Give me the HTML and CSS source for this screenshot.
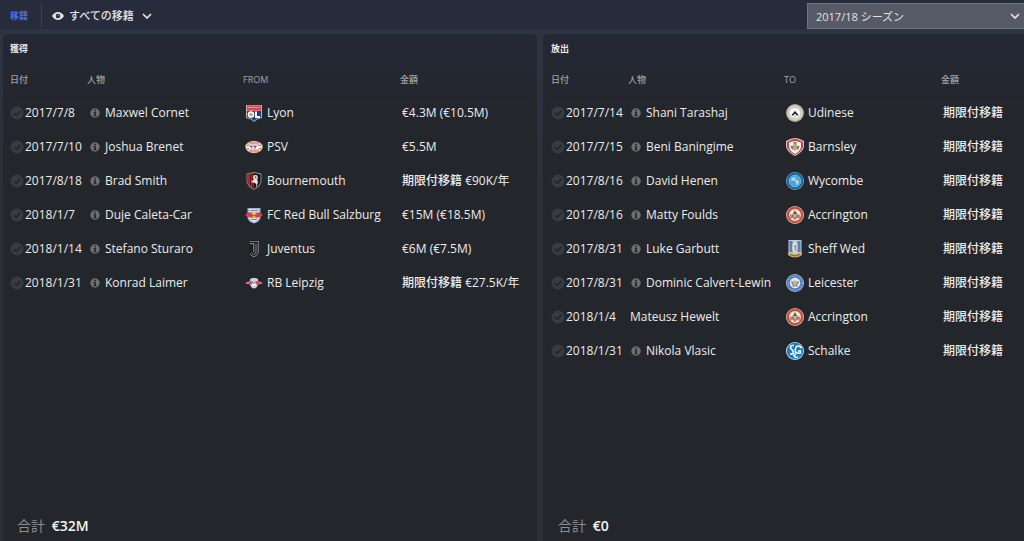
FILE: index.html
```html
<!DOCTYPE html>
<html lang="ja">
<head>
    <meta charset="UTF-8">
    <meta name="viewport" content="width=device-width, initial-scale=1.0">
    <title>移籍</title>
    <link rel="stylesheet" href="styles.css">
</head>
<body>
    <svg class="sprite" aria-hidden="true">
        <symbol id="check" viewBox="0 0 14 14">
            <circle cx="7" cy="7" r="6.5" fill="#383b3f"/>
            <path d="M4 7.2l2.2 2.1L10.300 5" fill="none" stroke="#202327" stroke-width="1.5"/>
        </symbol>
        <symbol id="info" viewBox="0 0 10 10">
            <circle cx="5" cy="5" r="4.700" fill="#6d6f71"/>
            <path d="M4.200 1.800h1.700v1.400H4.200zM3.600 4.100h2.300v3.200h.7v.9H3.500v-.9h.7V5h-.6z" fill="#24272b"/>
        </symbol>
        <symbol id="chevron" viewBox="0 0 10 6">
            <path d="M1 1l4 4 4-4" fill="none" stroke="#e2e3e5" stroke-width="1.700"/>
        </symbol>
        <symbol id="lyon" viewBox="0 0 18 18">
            <path d="M1 1h16v13l-5 1.500L9 18l-3-2.500L1 14z" fill="#b9b3ae"/>
            <path d="M2 1.500h14v5H2z" fill="#d84652"/>
            <path d="M3 3.500h12" stroke="#eda0a2" stroke-width="1"/>
            <path d="M2 7h14v6.500l-4.500 1.300L9 17l-2.500-2.200L2 13.500z" fill="#1b3f83"/>
            <circle cx="6" cy="10.500" r="2.600" fill="#d9a54b" stroke="#fff" stroke-width="1.500"/>
            <path d="M11 7.500V13h4" fill="none" stroke="#fff" stroke-width="2"/>
        </symbol>
        <symbol id="psv" viewBox="0 0 18 18">
            <ellipse cx="9" cy="9" rx="8.800" ry="6.200" fill="#c9a173"/>
            <ellipse cx="9" cy="9" rx="8" ry="5.500" fill="#f4e9e6"/>
            <path d="M4 5h10M2 7.200h14M2 10.800h14M4 13h10" stroke="#d84a50" stroke-width="1.100"/>
            <path d="M4 7.500h9.500V11H4z" fill="#fff"/>
            <path d="M5 8.500h2.500M8.500 8.500h3M6 10h1.500M9 10h2" stroke="#4d4a7c" stroke-width="1.200"/>
        </symbol>
        <symbol id="bournemouth" viewBox="0 0 18 18">
            <path d="M1.500 1.500L9 0l7.500 1.500V9q0 5-7.500 9-7.500-4-7.500-9z" fill="#8d8c88"/>
            <path d="M2.500 2.500L9 1l6.500 1.500V9q0 4-6.500 8-6.500-4-6.500-8z" fill="#171718"/>
            <path d="M2.500 2.500L9 1v16Q2.500 13 2.500 9z" fill="#ba202a"/>
            <path d="M5.500 2v11.500M7.700 2v13" stroke="#4d1015" stroke-width=".8"/>
            <path d="M10.500 15.500q2-3-.5-4.500L6 10q2-3 6-3l1 3-1.500 5z" fill="#e2dfdc"/>
            <circle cx="10.500" cy="5.500" r="2.400" fill="#efeeec"/>
            <path d="M9.500 5l1.500-.7.7 1.500-1 .8z" fill="#333"/>
        </symbol>
        <symbol id="salzburg" viewBox="0 0 18 18">
            <path d="M2.500 2h13v10q-1 4-6.500 5.500Q3.500 16 2.500 12z" fill="#a4adc8"/>
            <path d="M4 3h10v3H4z" fill="#d5daea"/>
            <path d="M5 4.500h8" stroke="#7e89b3" stroke-width="1"/>
            <circle cx="9" cy="8.500" r="2.600" fill="#f3c441"/>
            <path d="M0 9l3-2.500 3 .5 3 2.500L12 7l3-.5L18 9l-2 1.500-3 .5-2 .5-1-1.500H8l-1 1.500-2-.5-3-.5z" fill="#d93c4a"/>
            <path d="M4 12h10l-2 3-3 1.500L6 15z" fill="#dbe0ee"/>
            <path d="M6 13.500h6" stroke="#7781af" stroke-width="1"/>
        </symbol>
        <symbol id="juventus" viewBox="0 0 18 18">
            <path d="M4 0h10v12q0 4-5 5.500-2.500-.5-4-2.500" fill="#1b1d20"/>
            <path d="M4.500 1.500h9M4.500 3.700h5" stroke="#77797b" stroke-width="1.200"/>
            <path d="M13.300 1v11q0 3-4.300 4.800-2.500-.8-4-2.800M11 4v8q0 1.500-2.500 2.500-1.500-.5-2-2M8.700 4v8" fill="none" stroke="#8b8d8f" stroke-width="1"/>
        </symbol>
        <symbol id="leipzig" viewBox="0 0 18 18">
            <path d="M5 5l2.500-1h3L13 5v6l-2 3-2 .5L7 14l-2-3z" fill="#cbd0dd"/>
            <path d="M0 9l4-2 3 .3L9 9l2-1.700 3-.3 4 2-4 1.300-3 .2-2-1-2 1-3-.2z" fill="#db4a60"/>
            <path d="M7 8.500l2 1.500 2-1.500-.5 3.500h-3z" fill="#f4f5f8"/>
            <path d="M1 9.200h3M14 9.200h3" stroke="#e5c3cb" stroke-width=".7"/>
        </symbol>
        <symbol id="udinese" viewBox="0 0 18 18">
            <circle cx="9" cy="9" r="9" fill="#b5a68c"/>
            <circle cx="9" cy="9" r="7.800" fill="#d6d0c4"/>
            <circle cx="9" cy="9" r="5.600" fill="#fafafa" stroke="#c4c4c4" stroke-width=".7"/>
            <path d="M9 7l3.500 4-1.300.7L9 9.500l-2.200 2.200-1.300-.7z" fill="#17191c"/>
            <path d="M7.500 12.500L9 11l1.500 1.500L9 14z" fill="#c6c6c6"/>
        </symbol>
        <symbol id="barnsley" viewBox="0 0 18 18">
            <path d="M0 3q5-3 9-3t9 3v6q-2 6-9 9-7-3-9-9z" fill="#d9c5c4"/>
            <path d="M1 4q5-3 8-3t8 3v5q-2 5-8 8-6-3-8-8z" fill="#d33d4b"/>
            <path d="M3 4.500q6-3 12 0v5q-1.500 4-6 6.500-4.500-2.500-6-6.500z" fill="#f1efed"/>
            <path d="M7 6.500h4V11l-2 2-2-2z" fill="#cda544"/>
            <path d="M4.500 8H7v4l-2-2M11 8h2.500l-1 3-1.500 1z" fill="#567fa5"/>
            <path d="M7.500 4h3v2.500h-3z" fill="#7e9174"/>
        </symbol>
        <symbol id="wycombe" viewBox="0 0 18 18">
            <circle cx="9" cy="9" r="9" fill="#6ba2c4"/>
            <circle cx="9" cy="9" r="8.200" fill="#155d94"/>
            <circle cx="9" cy="9" r="6" fill="#45a8dc" stroke="#9ac8df" stroke-width=".7"/>
            <path d="M5 8q1-3 4-3l1 1.500 2 2 1 2-2 3-1-3-2-1z" fill="#b9d9e7"/>
            <path d="M7 9l2 1M9 7l2 1.500" stroke="#286a9e" stroke-width=".8"/>
        </symbol>
        <symbol id="accrington" viewBox="0 0 18 18">
            <circle cx="9" cy="9" r="9" fill="#d9bba9"/>
            <circle cx="9" cy="9" r="8.200" fill="#cf4a38"/>
            <circle cx="9" cy="9" r="5.900" fill="#ece9df"/>
            <path d="M6 8.500h6V11l-3 3-3-3z" fill="#b55345"/>
            <path d="M9 4l1.300 2.500L11.500 8h-5l1.200-1.500z" fill="#655b50"/>
            <path d="M5 8.500v4M13 8.500v4" stroke="#597269" stroke-width="1.300"/>
            <path d="M7 10h4M9 8v5" stroke="#e8d5b1" stroke-width=".8"/>
        </symbol>
        <symbol id="sheffwed" viewBox="0 0 18 18">
            <path d="M2.500 0h13v12q-1 2-6.500 3-5.500-1-6.500-3z" fill="#bdcbd8"/>
            <path d="M3.500 1h3v11h-3zM11.500 1h3v11h-3z" fill="#5582b6"/>
            <path d="M9 2l2.500 3v5L9 13l-2.500-3V5z" fill="#e9e6d8"/>
            <path d="M8 5h2.500v5L9 12z" fill="#9d9d85"/>
            <path d="M2 12q7 4 14 0v3q-7 5-14 0z" fill="#d1ae5a"/>
            <path d="M4 14.500q5 3 10 0" fill="none" stroke="#526b91" stroke-width="1"/>
        </symbol>
        <symbol id="leicester" viewBox="0 0 18 18">
            <circle cx="9" cy="9" r="9" fill="#a9bfdd"/>
            <circle cx="9" cy="9" r="8.200" fill="#426cb3"/>
            <circle cx="9" cy="9" r="7" fill="none" stroke="#b9cae5" stroke-width="1" stroke-dasharray="1.500 1"/>
            <circle cx="9" cy="9" r="5.400" fill="#dfe6f0"/>
            <path d="M5 7l3 1 1-2 1 2 3-1-1 3-1 3-2-1-2 1-1-3z" fill="#6688bd"/>
            <path d="M8 7h2l1.500 3L9 12l-2.500-2z" fill="#dcae5b"/>
        </symbol>
        <symbol id="schalke" viewBox="0 0 18 18">
            <circle cx="9" cy="9" r="9" fill="#d6e6f1"/>
            <circle cx="9" cy="9" r="8.200" fill="#187dc1"/>
            <path d="M8 3.500H6Q4 4 4.500 6l2.500 3q1 2-.5 3H4" fill="none" stroke="#fff" stroke-width="1.500"/>
            <path d="M15.500 6Q13.500 3 10.500 4.500 8.500 7 9.500 10q2 2 5 1V9H12" fill="none" stroke="#fff" stroke-width="1.500"/>
            <path d="M9 11v5M7 13.500h2.500M9 15.500q2 .5 3-1" fill="none" stroke="#fff" stroke-width="1.300"/>
        </symbol>
    </svg>

    <header class="topbar">
        <h1>移籍</h1>
        <div class="view">
            <svg class="eye" viewBox="0 0 12 8" aria-hidden="true">
                <path d="M0 4q2.500-4 6-4t6 4q-2.500 4-6 4T0 4z" fill="#e2e3e5"/>
                <circle cx="6" cy="4" r="2.300" fill="#282d3c"/>
                <circle cx="6.300" cy="3.500" r=".8" fill="#858892"/>
            </svg>
            <select id="view" aria-label="表示">
                <option>すべての移籍</option>
            </select>
            <svg class="chevron" aria-hidden="true"><use href="#chevron"/></svg>
        </div>
        <div class="season">
            <select id="season" aria-label="シーズン">
                <option>2017/18 シーズン</option>
            </select>
            <svg class="chevron" aria-hidden="true"><use href="#chevron"/></svg>
        </div>
    </header>

    <main class="panels">
        <section class="panel panel-in">
            <h2>獲得</h2>
            <table>
                <thead>
                    <tr><th class="date">日付</th><th class="person">人物</th><th class="club">FROM</th><th>金額</th></tr>
                </thead>
                <tbody>
                    <tr>
                        <td><div class="cell"><svg class="check"><use href="#check"/></svg>2017/7/8</div></td>
                        <td><div class="cell"><svg class="info"><use href="#info"/></svg>Maxwel Cornet</div></td>
                        <td><div class="cell"><svg class="crest"><use href="#lyon"/></svg>Lyon</div></td>
                        <td>€4.3M (€10.5M)</td>
                    </tr>
                    <tr>
                        <td><div class="cell"><svg class="check"><use href="#check"/></svg>2017/7/10</div></td>
                        <td><div class="cell"><svg class="info"><use href="#info"/></svg>Joshua Brenet</div></td>
                        <td><div class="cell"><svg class="crest"><use href="#psv"/></svg>PSV</div></td>
                        <td>€5.5M</td>
                    </tr>
                    <tr>
                        <td><div class="cell"><svg class="check"><use href="#check"/></svg>2017/8/18</div></td>
                        <td><div class="cell"><svg class="info"><use href="#info"/></svg>Brad Smith</div></td>
                        <td><div class="cell"><svg class="crest"><use href="#bournemouth"/></svg>Bournemouth</div></td>
                        <td><span class="loan">期限付移籍</span> €90K/年</td>
                    </tr>
                    <tr>
                        <td><div class="cell"><svg class="check"><use href="#check"/></svg>2018/1/7</div></td>
                        <td><div class="cell"><svg class="info"><use href="#info"/></svg>Duje Caleta-Car</div></td>
                        <td><div class="cell"><svg class="crest"><use href="#salzburg"/></svg>FC Red Bull Salzburg</div></td>
                        <td>€15M (€18.5M)</td>
                    </tr>
                    <tr>
                        <td><div class="cell"><svg class="check"><use href="#check"/></svg>2018/1/14</div></td>
                        <td><div class="cell"><svg class="info"><use href="#info"/></svg>Stefano Sturaro</div></td>
                        <td><div class="cell"><svg class="crest"><use href="#juventus"/></svg>Juventus</div></td>
                        <td>€6M (€7.5M)</td>
                    </tr>
                    <tr>
                        <td><div class="cell"><svg class="check"><use href="#check"/></svg>2018/1/31</div></td>
                        <td><div class="cell"><svg class="info"><use href="#info"/></svg>Konrad Laimer</div></td>
                        <td><div class="cell"><svg class="crest"><use href="#leipzig"/></svg>RB Leipzig</div></td>
                        <td><span class="loan">期限付移籍</span> €27.5K/年</td>
                    </tr>
                </tbody>
            </table>
            <p class="total">合計 <strong>€32M</strong></p>
        </section>

        <section class="panel panel-out">
            <h2>放出</h2>
            <table>
                <thead>
                    <tr><th class="date">日付</th><th class="person">人物</th><th class="club">TO</th><th>金額</th></tr>
                </thead>
                <tbody>
                    <tr>
                        <td><div class="cell"><svg class="check"><use href="#check"/></svg>2017/7/14</div></td>
                        <td><div class="cell"><svg class="info"><use href="#info"/></svg>Shani Tarashaj</div></td>
                        <td><div class="cell"><svg class="crest"><use href="#udinese"/></svg>Udinese</div></td>
                        <td><span class="loan">期限付移籍</span></td>
                    </tr>
                    <tr>
                        <td><div class="cell"><svg class="check"><use href="#check"/></svg>2017/7/15</div></td>
                        <td><div class="cell"><svg class="info"><use href="#info"/></svg>Beni Baningime</div></td>
                        <td><div class="cell"><svg class="crest"><use href="#barnsley"/></svg>Barnsley</div></td>
                        <td><span class="loan">期限付移籍</span></td>
                    </tr>
                    <tr>
                        <td><div class="cell"><svg class="check"><use href="#check"/></svg>2017/8/16</div></td>
                        <td><div class="cell"><svg class="info"><use href="#info"/></svg>David Henen</div></td>
                        <td><div class="cell"><svg class="crest"><use href="#wycombe"/></svg>Wycombe</div></td>
                        <td><span class="loan">期限付移籍</span></td>
                    </tr>
                    <tr>
                        <td><div class="cell"><svg class="check"><use href="#check"/></svg>2017/8/16</div></td>
                        <td><div class="cell"><svg class="info"><use href="#info"/></svg>Matty Foulds</div></td>
                        <td><div class="cell"><svg class="crest"><use href="#accrington"/></svg>Accrington</div></td>
                        <td><span class="loan">期限付移籍</span></td>
                    </tr>
                    <tr>
                        <td><div class="cell"><svg class="check"><use href="#check"/></svg>2017/8/31</div></td>
                        <td><div class="cell"><svg class="info"><use href="#info"/></svg>Luke Garbutt</div></td>
                        <td><div class="cell"><svg class="crest"><use href="#sheffwed"/></svg>Sheff Wed</div></td>
                        <td><span class="loan">期限付移籍</span></td>
                    </tr>
                    <tr>
                        <td><div class="cell"><svg class="check"><use href="#check"/></svg>2017/8/31</div></td>
                        <td><div class="cell"><svg class="info"><use href="#info"/></svg>Dominic Calvert-Lewin</div></td>
                        <td><div class="cell"><svg class="crest"><use href="#leicester"/></svg>Leicester</div></td>
                        <td><span class="loan">期限付移籍</span></td>
                    </tr>
                    <tr>
                        <td><div class="cell"><svg class="check"><use href="#check"/></svg>2018/1/4</div></td>
                        <td>Mateusz Hewelt</td>
                        <td><div class="cell"><svg class="crest"><use href="#accrington"/></svg>Accrington</div></td>
                        <td><span class="loan">期限付移籍</span></td>
                    </tr>
                    <tr>
                        <td><div class="cell"><svg class="check"><use href="#check"/></svg>2018/1/31</div></td>
                        <td><div class="cell"><svg class="info"><use href="#info"/></svg>Nikola Vlasic</div></td>
                        <td><div class="cell"><svg class="crest"><use href="#schalke"/></svg>Schalke</div></td>
                        <td><span class="loan">期限付移籍</span></td>
                    </tr>
                </tbody>
            </table>
            <p class="total">合計 <strong>€0</strong></p>
        </section>
    </main>
</body>
</html>
```
FILE: styles.css
```css
* {
    box-sizing: border-box;
}
body {
    margin: 0;
    min-height: 100vh;
    display: flex;
    flex-direction: column;
    font-family: "Open Sans", "Noto Sans CJK JP", sans-serif;
    font-size: 12px;
    line-height: 16px;
    color: #ececec;
    background: linear-gradient(#2f3445, #2c2f37 200px);
}
.sprite {
    position: absolute;
    width: 0;
    height: 0;
}
.topbar {
    display: flex;
    align-items: center;
    height: 29px;
    background-color: #272c3c;
}
h1 {
    margin: 0;
    width: 42px;
    padding: 5px 0 3px 10px;
    border-right: 1px solid #3d4250;
    font-size: 9px;
    font-weight: bold;
    color: #4a6df0;
}
select {
    appearance: none;
    border: none;
    border-radius: 0;
    background: none;
    color: #e2e3e5;
    font-family: inherit;
    font-size: 11px;
}
.view, .season {
    position: relative;
    display: flex;
    align-items: center;
}
.view {
    gap: 5px;
    padding: 2px 0 0 10px;
}
.view select {
    padding: 0 17px 0 0;
    font-weight: 500;
}
.eye {
    width: 12px;
    height: 8px;
}
.chevron {
    position: absolute;
    right: 0;
    width: 10px;
    height: 6px;
    pointer-events: none;
}
.season {
    width: 217px;
    height: 26px;
    margin: 3px 0 0 auto;
}
.season select {
    width: 100%;
    height: 100%;
    padding: 0 24px 0 8px;
    border: 1px solid #717680;
    border-right: none;
    background-color: #555a66;
}
.season .chevron {
    right: 4px;
}
.panels {
    flex: 1;
    display: grid;
    grid-template-columns: 534fr 481fr;
    gap: 6px;
    padding: 5px 0 0 3px;
}
.panel {
    display: flex;
    flex-direction: column;
    padding: 7px 6px 5px 7px;
    border-radius: 5px 5px 0 0;
    background: linear-gradient(#242835, #23262b 90px);
}
.panel-out {
    padding-right: 0;
    padding-left: 8px;
    border-top-right-radius: 0;
}
h2 {
    margin: 0;
    font-size: 9px;
    line-height: 16px;
    font-weight: bold;
}
table {
    width: 100%;
    table-layout: fixed;
    border-collapse: collapse;
    white-space: nowrap;
}
th {
    height: 39px;
    padding: 7px 0 0;
    border-bottom: 1px solid #202226;
    font-size: 9px;
    font-weight: 500;
    text-align: left;
    color: #a3a4a5;
}
.date {
    width: 77px;
}
.person {
    width: 156px;
}
.club {
    width: 157px;
}
td {
    height: 34px;
    padding: 0 0 0 2px;
}
td:first-child {
    padding-left: 0;
}
.loan {
    font-weight: 500;
}
.cell {
    display: flex;
    align-items: center;
}
.check {
    width: 14px;
    height: 14px;
    margin-right: 1px;
}
.info {
    width: 10px;
    height: 10px;
    margin: 0 5px 0 1px;
}
.crest {
    width: 18px;
    height: 18px;
    margin-right: 4px;
}
.total {
    margin: auto 0 0;
    padding-left: 7px;
    font-size: 14px;
    line-height: 20px;
    color: #8d8e8f;
}
.total strong {
    margin-left: 3px;
    font-weight: 600;
    color: #f4f4f4;
}
```
